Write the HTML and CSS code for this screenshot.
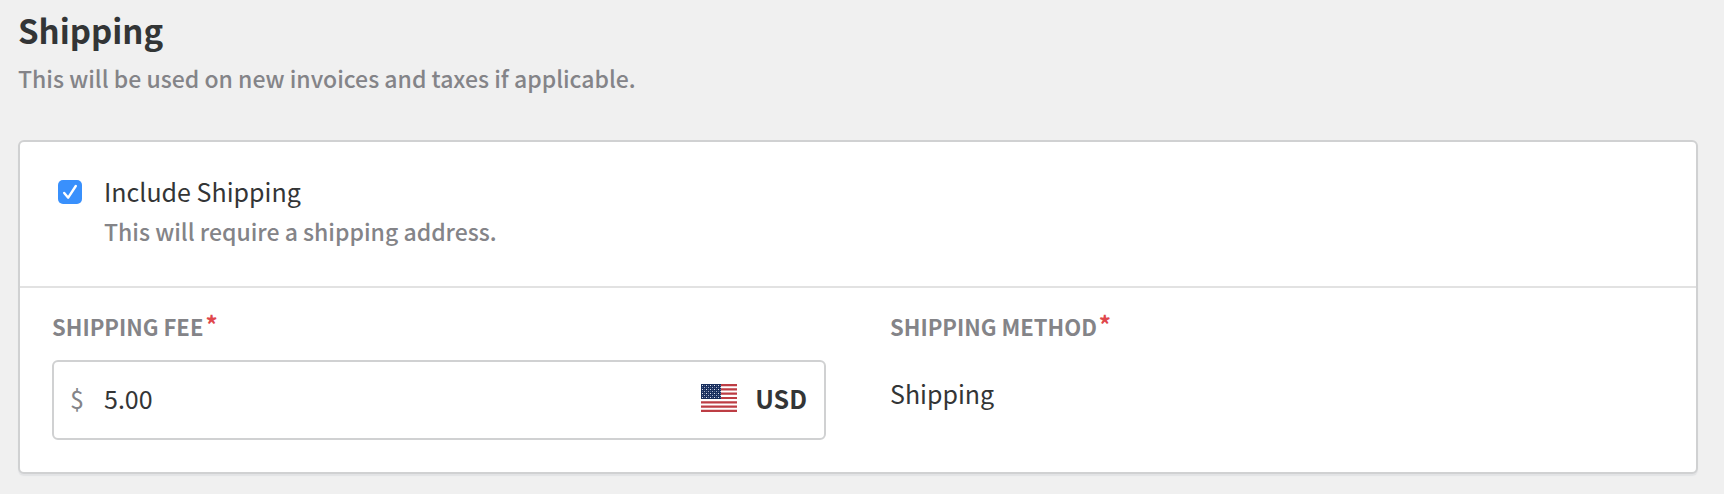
FILE: index.html
```html
<!DOCTYPE html>
<html lang="en">
<head>
<meta charset="utf-8">
<title>Shipping</title>
<link rel="stylesheet" href="styles.css">
</head>
<body>
<main class="page">
  <h1 class="title">Shipping</h1>
  <p class="subtitle">This will be used on new invoices and taxes if applicable.</p>
  <form class="card">
    <div class="toggle">
      <input class="checkbox" type="checkbox" id="include" aria-describedby="include-hint" checked>
      <div class="toggle-text">
        <label class="toggle-label" for="include">Include Shipping</label>
        <p class="hint" id="include-hint">This will require a shipping address.</p>
      </div>
    </div>
    <div class="fields">
      <div class="field">
        <label class="label" for="fee">SHIPPING FEE<span class="required">*</span></label>
        <div class="money">
          <span class="symbol">$</span>
          <input class="amount" type="text" id="fee" value="5.00">
          <svg class="flag" viewBox="0 0 36 28" aria-hidden="true">
            <defs>
              <pattern id="stars" width="4" height="4" patternUnits="userSpaceOnUse">
                <rect x="1" y="1" width="1" height="1" fill="#dfe3ee"/>
                <rect x="3" y="3" width="1" height="1" fill="#a9b3cc"/>
                <path d="M1 3h1v1H1zM3 1h1v1H3z" fill="#53648f"/>
              </pattern>
            </defs>
            <path fill="#fff" d="M0 0h36v28H0z"/>
            <path stroke="#bd3d44" stroke-width="2.15" d="M0 1.08h36M0 5.38h36M0 9.69h36M0 14h36M0 18.31h36M0 22.62h36M0 26.92h36"/>
            <path fill="#192f5d" d="M0 0h20v15H0z"/>
            <path fill="url(#stars)" d="M0 0h20v15H0z"/>
          </svg>
          <span class="currency">USD</span>
        </div>
      </div>
      <div class="field">
        <span class="label">SHIPPING METHOD<span class="required">*</span></span>
        <p class="value">Shipping</p>
      </div>
    </div>
  </form>
</main>
</body>
</html>
```
FILE: styles.css
```css
* {
  box-sizing: border-box;
}

body {
  margin: 0;
  background: #f0f0f0;
  color: #333536;
  font-family: "Noto Sans CJK SC", "Noto Sans", sans-serif;
  font-size: 25px;
  line-height: 40px;
}

h1,
p {
  margin: 0;
}

.page {
  padding: 10px 26px 20px 18px;
}

.title {
  font-size: 33px;
  font-weight: 700;
}

.subtitle {
  margin: 12px 0 46px;
  color: #848488;
  font-size: 23px;
  font-weight: 500;
  line-height: 32px;
}

.card {
  border: 2px solid #d0d1d2;
  border-radius: 6px;
  background: #fff;
  box-shadow: 0 2px 1px #e2e3e5;
}

.toggle {
  display: flex;
  gap: 22px;
  padding: 29px 38px 35px;
  border-bottom: 2px solid #e2e2e2;
}

.checkbox {
  appearance: none;
  width: 24px;
  height: 24px;
  margin: 9px 0 0;
  border-radius: 5px;
  background: #3990fc url("data:image/svg+xml,%3Csvg xmlns='http://www.w3.org/2000/svg' viewBox='0 0 24 24'%3E%3Cpath d='M6.2 13l4 4.7L17.8 6' fill='none' stroke='%23fff' stroke-width='2.4' stroke-linecap='round' stroke-linejoin='round'/%3E%3C/svg%3E") center / 24px 24px;
}

.toggle-label {
  display: block;
}

.hint {
  color: #848488;
  font-size: 23px;
  font-weight: 500;
}

.fields {
  display: grid;
  grid-template-columns: 1fr 1fr;
}

.field {
  padding: 22px 32px 32px;
}

.label {
  display: flex;
  gap: 2px;
  margin-bottom: 18px;
  color: #848488;
  font-size: 22px;
  font-weight: 700;
  line-height: 32px;
}

.required {
  color: #e0474c;
  font-size: 24px;
  line-height: 28px;
}

.money {
  display: flex;
  align-items: center;
  height: 80px;
  padding: 0 17px 5px 16px;
  border: 2px solid #d0d1d2;
  border-radius: 6px;
}

.symbol {
  width: 34px;
  color: #848488;
}

.amount {
  flex: 1;
  min-width: 0;
  height: 40px;
  padding: 0;
  border: 0;
  outline: 0;
  background: none;
  color: inherit;
  font: inherit;
}

.flag {
  width: 36px;
  height: 28px;
  margin-right: 18px;
}

.currency {
  font-weight: 700;
}

.value {
  margin-top: 31px;
}
```
